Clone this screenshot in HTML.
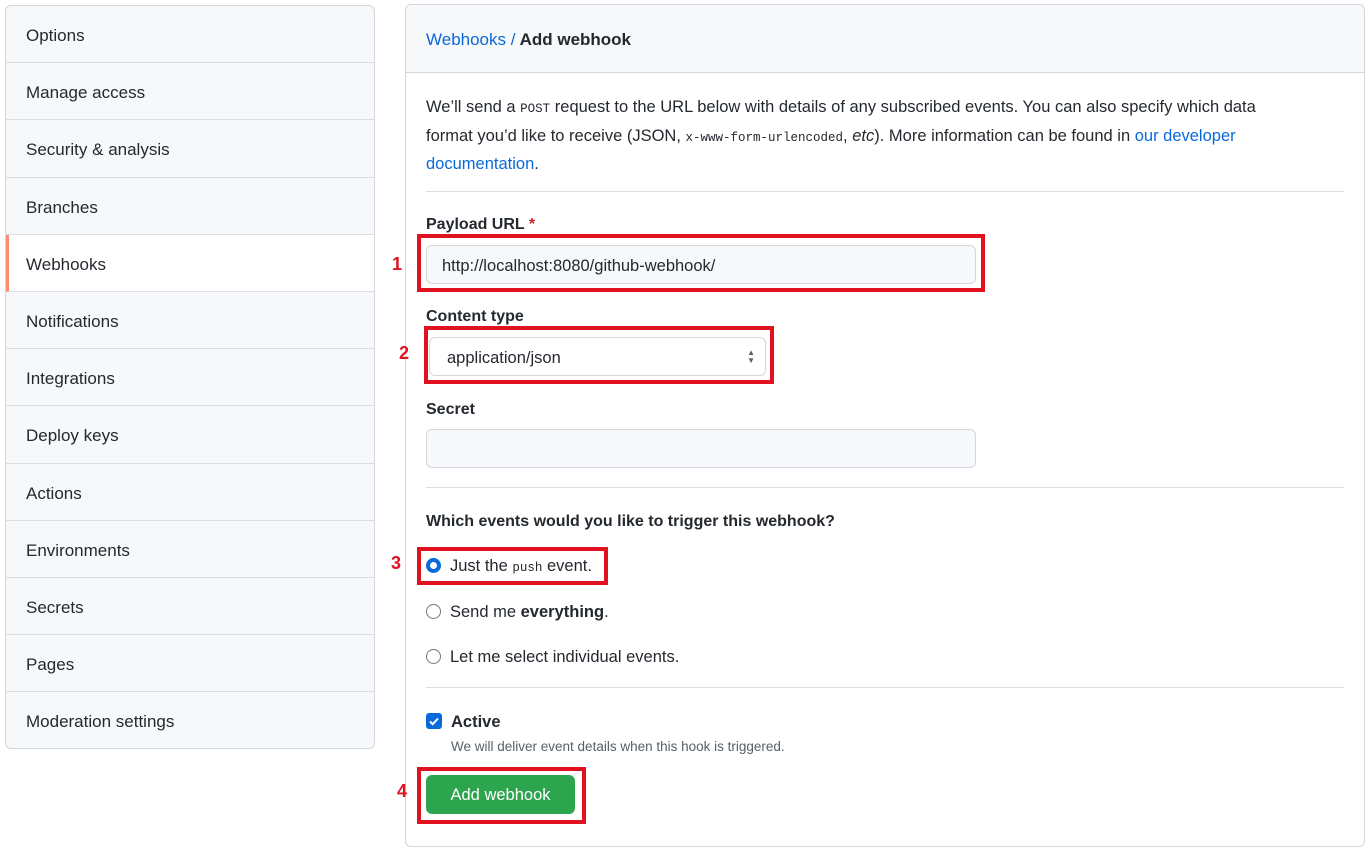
<!DOCTYPE html>
<html><head><style>
*{box-sizing:border-box;margin:0;padding:0}
body{width:1372px;height:853px;background:#fff;font-family:"Liberation Sans",sans-serif;color:#24292f;font-size:16px;position:relative;overflow:hidden}
.a{position:absolute}
.side{left:5px;top:5px;width:370px;height:744px;border:1px solid #d0d7de;border-radius:6px;background:#f6f8fa;overflow:hidden}
.side div{height:57.2px;line-height:59px;padding-left:20px;border-bottom:1px solid #d8dee4;font-size:17px}
.side div.sel{background:#fff;border-left:3px solid #fd8c73;padding-left:17px}
.side div:last-child{border:none}
.main{left:405px;top:4px;width:960px;height:843px;border:1px solid #d0d7de;border-radius:6px;overflow:hidden}
.hd{height:68px;background:#f6f8fa;border-bottom:1px solid #d0d7de;padding-left:20px;line-height:70px;font-size:17px;font-weight:bold}
.hr{position:absolute;left:426px;width:918px;height:1px;background:#d8dee4}
.lbl{font-weight:bold;font-size:16px}
.inp{border:1px solid #d0d7de;border-radius:6px;background:#f6f8fa}
.red{border:4px solid #e0121f}
.num{color:#e0121f;font-weight:bold;font-size:18px}
code{font-family:"Liberation Mono",monospace;font-size:12.5px}
.rad{width:15px;height:15px;border:1.5px solid #6e7781;border-radius:50%;background:#fff}
a{color:#0969da;text-decoration:none}
</style></head><body>
<div class="a side">
<div>Options</div><div>Manage access</div><div>Security &amp; analysis</div><div>Branches</div><div class="sel">Webhooks</div><div>Notifications</div><div>Integrations</div><div>Deploy keys</div><div>Actions</div><div>Environments</div><div>Secrets</div><div>Pages</div><div>Moderation settings</div>
</div>
<div class="a main"><div class="hd"><span style="color:#0969da;font-weight:normal">Webhooks</span> <span style="color:#0969da;font-weight:normal">/</span> Add webhook</div></div>
<div class="a" style="left:426px;top:94px;width:862px;line-height:26.5px;font-size:16.5px">We’ll send a <code>POST</code> request to the URL below with details of any subscribed events. You can also specify which data format you’d like to receive (JSON, <code>x-www-form-urlencoded</code>, <i>etc</i>). More information can be found in <a>our developer</a> <a>documentation</a>.</div>
<div class="hr" style="top:191px"></div>
<div class="a lbl" style="left:426px;top:216px">Payload URL <span style="color:#cf222e">*</span></div>
<div class="a red" style="left:417px;top:234px;width:568px;height:58px"></div>
<div class="a inp" style="left:426px;top:245px;width:550px;height:39px;padding:11px 15px;font-size:16.5px">http://localhost:8080/github-webhook/</div>
<div class="a num" style="left:392px;top:254px">1</div>
<div class="a lbl" style="left:426px;top:308px">Content type</div>
<div class="a red" style="left:424px;top:326px;width:350px;height:58px"></div>
<div class="a inp" style="left:429px;top:337px;width:337px;height:39px;padding:11px 17px;font-size:16.5px;background:#fff">application/json<span style="position:absolute;right:10px;top:11px;font-size:8px;line-height:8px;color:#57606a">▲<br>▼</span></div>
<div class="a num" style="left:399px;top:343px">2</div>
<div class="a lbl" style="left:426px;top:401px">Secret</div>
<div class="a inp" style="left:426px;top:429px;width:550px;height:39px"></div>
<div class="hr" style="top:487px"></div>
<div class="a lbl" style="left:426px;top:513px">Which events would you like to trigger this webhook?</div>
<div class="a red" style="left:417px;top:547px;width:191px;height:38px"></div>
<div class="a num" style="left:391px;top:553px">3</div>
<div class="a rad" style="left:426px;top:558px;border:4.5px solid #0969da"></div>
<div class="a" style="left:450px;top:557px;font-size:16.5px">Just the <code>push</code> event.</div>
<div class="a rad" style="left:426px;top:604px"></div>
<div class="a" style="left:450px;top:603px;font-size:16.5px">Send me <b>everything</b>.</div>
<div class="a rad" style="left:426px;top:649px"></div>
<div class="a" style="left:450px;top:648px;font-size:16.5px">Let me select individual events.</div>
<div class="hr" style="top:687px"></div>
<div class="a" style="left:426px;top:713px;width:16px;height:16px;background:#0969da;border-radius:3px"><svg width="16" height="16"><path d="M4 8.5l2.7 2.7L12 5.5" stroke="#fff" stroke-width="2" fill="none"/></svg></div>
<div class="a lbl" style="left:451px;top:713px;font-size:16.5px">Active</div>
<div class="a" style="left:451px;top:739px;font-size:13.5px;color:#57606a">We will deliver event details when this hook is triggered.</div>
<div class="a red" style="left:417px;top:767px;width:169px;height:57px"></div>
<div class="a num" style="left:397px;top:781px">4</div>
<div class="a" style="left:426px;top:775px;width:149px;height:39px;background:#2da44e;border-radius:6px;color:#fff;font-size:16.5px;text-align:center;line-height:41px">Add webhook</div>
</body></html>
